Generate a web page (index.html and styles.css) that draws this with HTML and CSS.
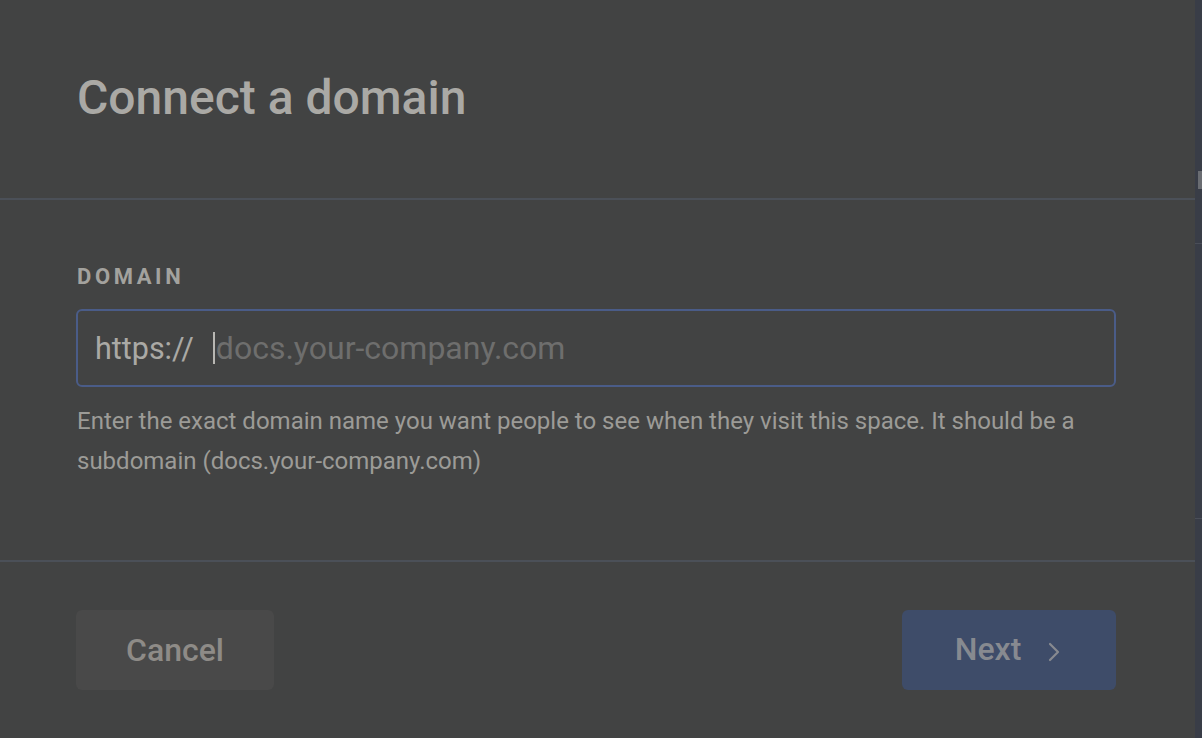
FILE: index.html
```html
<!DOCTYPE html>
<html lang="en">
<head>
<meta charset="utf-8">
<title>Connect a domain</title>
<link rel="stylesheet" href="styles.css">
</head>
<body>
<div class="page">
  <div class="modal">
    <header class="modal-header">
      <h1 class="title">Connect a domain</h1>
    </header>
    <section class="modal-body">
      <label class="field-label" for="domain">DOMAIN</label>
      <div class="input-box">
        <span class="prefix">https://</span>
        <span class="caret"></span>
        <span class="placeholder">docs.your-company.com</span>
      </div>
      <p class="help">Enter the exact domain name you want people to see when they visit this space. It should be a subdomain (docs.your-company.com)</p>
    </section>
    <footer class="modal-footer">
      <button class="btn btn-cancel">Cancel</button>
      <button class="btn btn-next">Next
        <svg class="chev" width="14" height="22" viewBox="0 0 14 22"><path d="M3 3 L11 11 L3 19" fill="none" stroke="currentColor" stroke-width="2.2" stroke-linecap="round" stroke-linejoin="round"/></svg>
      </button>
    </footer>
  </div>
  <div class="side">
    <div class="side-thumb"></div>
    <div class="side-line one"></div>
    <div class="side-line two"></div>
  </div>
</div>
</body>
</html>
```
FILE: styles.css
```css
* { box-sizing: border-box; }
html, body { margin: 0; padding: 0; }
body {
  width: 1202px;
  height: 738px;
  overflow: hidden;
  background: #424343;
  font-family: Roboto, "Liberation Sans", sans-serif;
}
.page {
  display: flex;
  width: 1202px;
  height: 738px;
}
.modal {
  width: 1195px;
  height: 738px;
  display: flex;
  flex-direction: column;
  background: #424343;
}
.modal-header {
  height: 200px;
  display: flex;
  align-items: center;
  padding: 0 0 4px 77px;
  border-bottom: 2px solid #4b5058;
}
.title {
  margin: 0;
  font-size: 48px;
  font-weight: 500;
  color: #aaa9a5;
}
.modal-body {
  height: 362px;
  padding: 64px 79px 0 76px;
  display: flex;
  flex-direction: column;
  border-bottom: 2px solid #4b5058;
}
.field-label {
  display: block;
  font-size: 22px;
  line-height: 26px;
  font-weight: 700;
  letter-spacing: 3.6px;
  color: #a3a29e;
  margin-left: 1px;
  margin-bottom: 19px;
}
.input-box {
  height: 78px;
  border: 2px solid #4a5c88;
  border-radius: 6px;
  display: flex;
  align-items: center;
  padding-left: 17px;
}
.prefix {
  color: #aaa9a5;
  font-size: 30.5px;
}
.caret {
  width: 2px;
  height: 32px;
  background: #b8b7b3;
  margin-left: 19px;
  margin-right: 1px;
}
.placeholder {
  color: #6e6e6d;
  font-size: 32px;
}
.help {
  margin: 14px 0 0 1px;
  font-size: 24px;
  line-height: 40px;
  color: #9c9b97;
}
.modal-footer {
  flex: 1;
  display: flex;
  justify-content: space-between;
  align-items: flex-start;
  padding: 48px 79px 0 76px;
}
.btn {
  height: 80px;
  border: none;
  border-radius: 6px;
  font-family: Roboto, "Liberation Sans", sans-serif;
  font-size: 32px;
  font-weight: 500;
  display: flex;
  align-items: center;
  justify-content: center;
}
.btn-cancel {
  width: 198px;
  background: #494949;
  color: #8e8b87;
  padding-top: 1px;
}
.btn-next {
  width: 214px;
  background: #3e4c69;
  color: #878a90;
  gap: 26px;
  padding-bottom: 4px;
  padding-right: 8px;
}
.chev { margin-top: 6px; }
.side {
  width: 7px;
  height: 738px;
  background: #393d47;
  position: relative;
}
.side-thumb {
  position: absolute;
  left: 3px;
  top: 171px;
  width: 4px;
  height: 18px;
  background: #6a6d72;
}
.side-line {
  position: absolute;
  left: 0;
  width: 7px;
  height: 1px;
  background: #4a4e58;
}
.side-line.one { top: 243px; }
.side-line.two { top: 518px; }
```
